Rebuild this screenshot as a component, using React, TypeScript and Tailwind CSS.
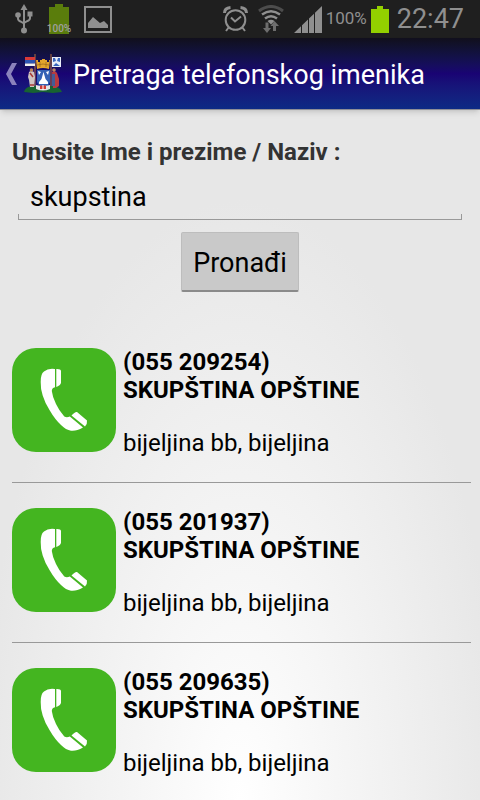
const entries = [
  { id: 1, phone: '(055 209254)', name: 'SKUPŠTINA OPŠTINE', address: 'bijeljina bb, bijeljina' },
  { id: 2, phone: '(055 201937)', name: 'SKUPŠTINA OPŠTINE', address: 'bijeljina bb, bijeljina' },
  { id: 3, phone: '(055 209635)', name: 'SKUPŠTINA OPŠTINE', address: 'bijeljina bb, bijeljina' },
]

function UsbIcon() {
  return (
    <svg width="20" height="30" viewBox="0 0 20 30" fill="none" stroke="#8f8f8f" strokeWidth="2">
      <path d="M10 5v20M4 11v3.500q0 2 2.500 3l3.500 2M16 10v4q0 2-2.500 3L10 19" />
      <path d="M10 0l3.500 6h-7z" fill="#8f8f8f" stroke="none" />
      <circle cx="4" cy="11" r="2.800" fill="#8f8f8f" stroke="none" />
      <path d="M13.500 7.500h5v5h-5z" fill="#8f8f8f" stroke="none" />
      <circle cx="10" cy="26.500" r="3" fill="#8f8f8f" stroke="none" />
    </svg>
  )
}

function PictureIcon() {
  return (
    <svg width="28" height="27" viewBox="0 0 28 27" fill="none">
      <rect x="1" y="1" width="26" height="25" stroke="#8f8f8f" strokeWidth="2" />
      <path d="M4 22v-5l5-6 7 6 4-2 4 4v3z" fill="#8f8f8f" />
    </svg>
  )
}

function AlarmIcon() {
  return (
    <svg width="25" height="26" viewBox="0 0 25 26" fill="none" stroke="#8f8f8f" strokeWidth="2">
      <circle cx="12.500" cy="14" r="9.800" />
      <path d="M8 11.500l4 4 6-5M6 21l-3 4M19 21l3 4" />
      <path d="M1.500 7q0-5 6-5.500M17.500 1.500q6 .5 6 5.500" strokeWidth="3" />
    </svg>
  )
}

function WifiIcon() {
  return (
    <svg width="26" height="28" viewBox="0 0 26 28" fill="none">
      <path d="M1 6q12-9 24 0" stroke="#4c4c4c" strokeWidth="3" />
      <path d="M4 9.500q9-6.500 18 0M7 13.500q6-4.500 12 0" stroke="#8f8f8f" strokeWidth="2.500" />
      <path d="M9.500 16q3.500-2.500 7 0L13 19.500z" fill="#8f8f8f" />
      <path d="M7.500 17.500h3v5.500H13L9 28l-4-5h2.500zM15 26v-5h-2.500l4-5 4.500 5h-3v5z" fill="#6d6d6d" />
    </svg>
  )
}

function SignalIcon() {
  return (
    <svg width="28" height="27" viewBox="0 0 28 27" fill="#8f8f8f">
      <path d="M0 27l7-6.700V27zM8 27v-7.700l6-5.800V27zM15 27V12.500l5-4.800V27zM21 27V6.800L28 0v27z" />
    </svg>
  )
}

function BatteryIcon() {
  return (
    <svg width="18" height="27" viewBox="0 0 18 27" fill="#93d000">
      <path d="M6 0h6v3h6v24H0V3h6z" />
    </svg>
  )
}

function StatusBar() {
  return (
    <div className="flex h-[38px] items-center justify-between bg-[#1f1f1f] pr-4 pl-[14px] text-[#8f8f8f]">
      <div className="flex items-center gap-3">
        <UsbIcon />
        <div className="relative mx-px h-[30px] w-6">
          <svg className="mx-auto" width="20" height="30" viewBox="0 0 20 30" fill="#5a7d0c">
            <path d="M6 0h8v3h6v27H0V3h6z" />
          </svg>
          <span className="absolute inset-x-0 -bottom-px flex justify-center text-[10px] leading-3 font-medium text-[#a0a0a0]">
            100%
          </span>
        </div>
        <PictureIcon />
      </div>
      <div className="flex items-center">
        <AlarmIcon />
        <div className="ml-2.5">
          <WifiIcon />
        </div>
        <div className="ml-2.5">
          <SignalIcon />
        </div>
        <span className="ml-1 text-[17px]">100%</span>
        <div className="ml-1">
          <BatteryIcon />
        </div>
        <span className="ml-2 text-[27px] leading-8">22:47</span>
      </div>
    </div>
  )
}

function CoatOfArms() {
  return (
    <svg width="38" height="40" viewBox="0 0 38 40">
      <path d="M0 38q1-5 8-6h22q6 1 8 6l-9 1-10-1-10 1z" fill="#176331" />
      <path d="M11 0v32M27 0v32" stroke="#b5713a" strokeWidth="1" />
      <path d="M1 3h10v3H1z" fill="#d93a38" />
      <path d="M1 6h10v3.500H1z" fill="#2c55b5" />
      <path d="M1 9.500h10V12H1z" fill="#f2f2f2" />
      <path d="M28 3h9v10h-9z" fill="#e9eef8" />
      <path d="M29 4h2l1 3-3 1zM36 4h-2l-1 3 3 1zM29 12l3-3 4 3z" fill="#3865bd" />
      <path d="M12 6h2v2h2V6h2V5h3v1h2v2h2V6h1l-1 9q-6-2-12 0z" fill="#e3a52c" />
      <path d="M13 11q6-2 12 0M16 8v5M22 8v5" stroke="#9a651b" strokeWidth="0.700" fill="none" />
      <path d="M13 16h13v12q-2 5-6 6-5-1-7-6z" fill="#3462b5" />
      <path d="M19.500 18l2 7 2.500 3v2h-9v-2l2.500-3zM14 17l3 1-2 3zM25 17l-3 1 2 3z" fill="#fff" />
      <path d="M5 18q2-2 5 0l1 5-1 10H6l-1-7-1-3z" fill="#cfc4c2" />
      <path d="M6 19l3 4M6 31h4" stroke="#a83b35" strokeWidth="1.500" />
      <path d="M28 18q3-2 5 1l2 6v7l-3 2h-3z" fill="#b83a40" />
      <path d="M28 20h3v12h-3z" fill="#445c96" />
      <circle cx="7.500" cy="16" r="1.800" fill="#b98460" />
      <circle cx="30" cy="16" r="1.800" fill="#b98460" />
      <path d="M12 31q7 2 14 0v4q-7 3-14 0z" fill="#e4e4e4" />
      <path d="M16 31.500h6V35h-6z" fill="#d13a33" />
      <path d="M18.500 31h1v5h-1z" fill="#fff" />
    </svg>
  )
}

function Header() {
  return (
    <header className="flex h-[72px] items-center border-b border-[#8e8e96] bg-linear-to-b from-[#110f1c] via-[#190373] to-[#0d2a85] pl-1.5 text-white shadow-md">
      <a href="#" aria-label="Nazad" className="flex items-center">
        <svg width="11" height="22" viewBox="0 0 11 22" fill="#8b82bc">
          <path d="M6 0h5L5 11l6 11H6L0 11z" />
        </svg>
        <span className="ml-[7px]">
          <CoatOfArms />
        </span>
      </a>
      <h1 className="ml-[11px] pt-1 text-[27px]">Pretraga telefonskog imenika</h1>
    </header>
  )
}

function PhoneIcon() {
  return (
    <svg width="104" height="104" viewBox="0 0 104 104" className="shrink-0">
      <rect width="104" height="104" rx="24" fill="#44b520" />
      <path
        d="M43 21Q36 20 32 23.500 28.500 26 28.700 34 28.500 41 30.700 47.500 33 55 37.500 62 43 71.500 49 77q5 5 10 5.700 5 .8 12-3.200L57.800 68.600q-3 1.200-5.500 0Q47 62.500 44 56q-3.500-7-4.200-13 0-3 3.200-3.800z"
        fill="#fff"
      />
      <path d="M44.300 21q4.700-.2 4.700 2v11.500q0 2.500-4.700 4.500z" fill="#fff" />
      <path d="M59.500 67.500q3.500-4 5.500-3.500L75 72.500q.5 3-2 6z" fill="#fff" />
    </svg>
  )
}

export default function App() {
  return (
    <div className="min-h-screen bg-[#e7e7e7] bg-[radial-gradient(ellipse_260px_600px_at_50%_100%,#ffffff,#e7e7e7)] font-[Roboto,sans-serif] text-black">
      <StatusBar />
      <Header />
      <main className="px-3 pt-6">
        <form onSubmit={(e) => e.preventDefault()}>
          <label htmlFor="query" className="block text-2xl leading-9 font-bold text-[#333]">
            Unesite Ime i prezime / Naziv :
          </label>
          <div className="relative mx-1.5 mt-1">
            <input
              id="query"
              type="text"
              defaultValue="skupstina"
              className="block h-[46px] w-full border-b border-[#999] px-3 text-[27px] outline-none"
            />
            <span className="absolute bottom-0 left-0 h-1.5 w-full border-x border-[#999]" />
          </div>
          <button
            type="submit"
            className="mx-auto mt-3 block h-[60px] rounded-xs border border-b-2 border-[#bdbdbd] border-b-[#8a8a8a] bg-[#c9c9c9] px-[11px] pt-1 text-[27px]"
          >
            Pronađi
          </button>
        </form>
        <ul className="-mr-[3px] mt-[31px]">
          {entries.map((entry) => (
            <li key={entry.id} className="border-b border-[#999] pt-[25px] pb-[25px] last:border-b-0 last:pb-2">
              <div className="flex gap-[7px]">
                <PhoneIcon />
                <div className="text-2xl leading-7">
                  <p className="font-bold">{entry.phone}</p>
                  <p className="font-bold">{entry.name}</p>
                  <p className="mt-[25px]">{entry.address}</p>
                </div>
              </div>
            </li>
          ))}
        </ul>
      </main>
    </div>
  )
}
